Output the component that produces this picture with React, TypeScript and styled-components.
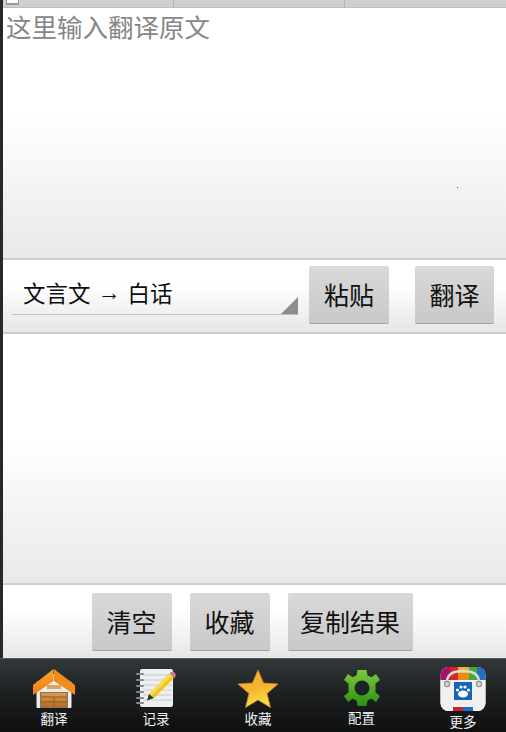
import React from "react";
import styled, { createGlobalStyle } from "styled-components";

const Global = createGlobalStyle`
  html, body { margin: 0; padding: 0; background: #fff; overflow: hidden; }
  #root { width: 506px; height: 732px; }
`;

const Screen = styled.div`
  width: 506px;
  height: 732px;
  overflow: hidden;
  display: flex;
  flex-direction: column;
  font-family: "Noto Sans CJK SC", "Noto Sans", sans-serif;
  background: #26292a;
`;
const Content = styled.div`
  margin-left: 3px;
  display: flex;
  flex-direction: column;
  background: #fff;
`;
const TabStrip = styled.div`
  height: 7px;
  display: flex;
  background: #cfcfcf;
  border-bottom: 1px solid #bdbdbd;
`;
const TabCell = styled.div<{ $w: number }>`
  width: ${(p) => p.$w}px;
  flex: none;
  border-right: 1px solid #b4b4b4;
  position: relative;
`;
const TabIcon = styled.span`
  position: absolute;
  left: 3px;
  top: 0;
  width: 11px;
  height: 3px;
  background: #fff;
  border: solid #9a9a9a;
  border-width: 0 1px 2px;
`;
const TextPane = styled.div<{ $h: number }>`
  height: ${(p) => p.$h}px;
  position: relative;
  box-sizing: border-box;
  padding: 3px 3px;
  background: linear-gradient(#fff 0%, #fff 42%, #e9e9e9 100%);
  border-bottom: 2px solid #cdcdcd;
`;
const Placeholder = styled.div`
  font-size: 25.5px;
  line-height: 30px;
  color: #868686;
`;
const Speck = styled.i`
  position: absolute;
  left: 454px;
  top: 179px;
  width: 1px;
  height: 1px;
  background: #a04040;
`;
const ActionRow = styled.div<{ $h: number; $top: number }>`
  height: ${(p) => p.$h}px;
  box-sizing: border-box;
  padding-top: ${(p) => p.$top}px;
  display: flex;
  background: linear-gradient(#fff 0%, #fff 35%, #e6e6e6 100%);
`;
const CenterRow = styled(ActionRow)`
  justify-content: center;
  gap: 18px;
  padding-right: 5px;
`;
const SelectRow = styled(ActionRow)`
  border-bottom: 2px solid #cdcdcd;
  align-items: flex-start;
`;
const Select = styled.div`
  width: 286px;
  height: 50px;
  margin: -1px 11px 0 9px;
  box-sizing: border-box;
  padding: 8px 0 0 11px;
  position: relative;
  border-bottom: 1px solid #c0c0c0;
  font-size: 22.5px;
  line-height: 38px;
  color: #0c0c0c;
  display: flex;
  gap: 7px;
`;
const SelectArrow = styled.span`
  font-family: "Liberation Sans", sans-serif;
  font-size: 23px;
`;
const SelectCorner = styled.span`
  position: absolute;
  right: 0;
  bottom: 0;
  width: 0;
  height: 0;
  border-style: solid;
  border-width: 0 0 17px 17px;
  border-color: transparent transparent #8c8c8c transparent;
`;
const PushButton = styled.button<{ $w: number; $ml?: number }>`
  width: ${(p) => p.$w}px;
  height: 58px;
  margin: 0 0 0 ${(p) => p.$ml ?? 0}px;
  padding: 0;
  flex: none;
  font-family: inherit;
  font-size: 25px;
  line-height: 1;
  color: #111;
  background: linear-gradient(#d9d9d9, #c9c9c9);
  border: none;
  border-bottom: 1px solid #a2a2a2;
  border-radius: 2px;
`;
const NavBar = styled.nav`
  height: 74px;
  box-sizing: border-box;
  padding-left: 3px;
  border-top: 1px solid #55595a;
  display: grid;
  grid-template-columns: repeat(5, 102px);
  background: linear-gradient(#33383a 0%, #1e2122 45%, #0e0f0f 100%);
`;
const NavItem = styled.div<{ $pt: number; $nudge?: number }>`
  display: flex;
  flex-direction: column;
  align-items: center;
  padding-top: ${(p) => p.$pt}px;
  margin-left: ${(p) => p.$nudge ?? 0}px;
  color: #f2f2f2;
  font-size: 13.5px;
  line-height: 16px;
`;
const NavIcon = styled.svg`
  display: block;
  flex: none;
`;
const GearLabel = styled.span`
  margin-top: 3px;
`;

const House = () => (
  <NavIcon width="44" height="42" viewBox="0 0 44 42">
    <defs>
      <linearGradient id="roofL" x1="0" y1="0" x2="0" y2="1"><stop offset="0" stopColor="#fba62c" /><stop offset="1" stopColor="#ee7c14" /></linearGradient>
      <linearGradient id="door" x1="0" y1="0" x2="0" y2="1"><stop offset="0" stopColor="#d99a52" /><stop offset="1" stopColor="#b46d24" /></linearGradient>
    </defs>
    <path d="M4.500 14 L22 6 L39.500 14 V39 Q39.500 40 38.500 40 H5.500 Q4.500 40 4.500 39Z" fill="#ecebe6" />
    <path d="M21.500 1 L1 17 V27 L21.500 13Z" fill="url(#roofL)" />
    <path d="M22 1 L43 17 V27 L22 13Z" fill="#f18c1e" />
    <rect x="15" y="17" width="14" height="4" fill="#d9a468" />
    <rect x="8" y="24" width="28" height="16" fill="#8a7660" />
    <rect x="9.500" y="25" width="25" height="14" fill="url(#door)" />
    <path d="M9.500 29H34.500M9.500 34H34.500M22 29V39" stroke="#94591d" strokeWidth="1" />
  </NavIcon>
);

const Notebook = () => (
  <NavIcon width="44" height="42" viewBox="0 0 44 42">
    <rect x="6" y="1" width="33" height="38" rx="2" fill="#efefef" />
    <path d="M9 7H38M9 12H38M9 17H38M9 22H38M9 27H38M9 32H38" stroke="#c3cbd4" strokeWidth="1" />
    <path d="M3 6H9M3 12H9M3 18H9M3 24H9M3 30H9M3 35H9" stroke="#7f8a8c" strokeWidth="2" strokeLinecap="round" />
    <path d="M35 6 L40 10 L20 30 L15 26Z" fill="#f1c41a" />
    <path d="M35 6 L37.500 8 L17.500 28 L15 26Z" fill="#f9dc4a" />
    <path d="M35.500 5.500 Q38 2 40.500 4.500 Q43 7 40.500 10Z" fill="#c87a9a" />
    <path d="M15 26 L20 30 L13 32.500Z" fill="#2d3a28" />
  </NavIcon>
);

const Star = () => (
  <NavIcon width="44" height="42" viewBox="0 0 44 42">
    <defs>
      <linearGradient id="starF" x1="0" y1="0" x2="0.300" y2="1"><stop offset="0" stopColor="#f8ad38" /><stop offset="0.550" stopColor="#f6b32c" /><stop offset="1" stopColor="#f8dc4a" /></linearGradient>
    </defs>
    <path d="M22 2 L27.500 15 L42 16 L31 25.500 L34.500 39.500 L22 32 L9.500 39.500 L13 25.500 L2 16 L16.500 15Z" fill="url(#starF)" stroke="#c98a24" strokeWidth="0.800" strokeLinejoin="round" />
  </NavIcon>
);

const Gear = () => (
  <NavIcon width="36" height="36" viewBox="-18 -18 36 36">
    <defs>
      <linearGradient id="gearF" x1="0" y1="0" x2="0" y2="1"><stop offset="0" stopColor="#7ccb3a" /><stop offset="1" stopColor="#2d8f14" /></linearGradient>
    </defs>
    <path fill="url(#gearF)" d="M-4.500 -18 H4.500 L5.500 -12.500 L9.500 -10.800 L14 -14 L18 -8 L13.500 -4.500 L13.500 4.500 L18 8 L14 14 L9.500 10.800 L5.500 12.500 L4.500 18 H-4.500 L-5.500 12.500 L-9.500 10.800 L-14 14 L-18 8 L-13.500 4.500 L-13.500 -4.500 L-18 -8 L-14 -14 L-9.500 -10.800 L-5.500 -12.500Z" />
    <circle r="7.500" fill="#1d2627" />
  </NavIcon>
);

const Bag = () => (
  <NavIcon width="46" height="46" viewBox="0 0 46 46">
    <defs>
      <clipPath id="bagClip"><rect x="0.500" y="0" width="45" height="44" rx="8" /></clipPath>
    </defs>
    <g clipPath="url(#bagClip)">
      <rect x="0" y="0" width="46" height="46" fill="#ececec" />
      <rect x="0" y="0" width="10" height="13" fill="#a4126e" />
      <rect x="10" y="0" width="8" height="13" fill="#d02a2a" />
      <rect x="18" y="0" width="11" height="6" fill="#f0b41e" />
      <rect x="18" y="6" width="11" height="7" fill="#e88a1a" />
      <rect x="29" y="0" width="8" height="13" fill="#4aa83a" />
      <rect x="37" y="0" width="9" height="13" fill="#1e70c8" />
      <rect x="0" y="13" width="46" height="31" fill="#f0f0ee" />
      <rect x="13" y="40" width="10" height="4" fill="#d0202a" />
      <rect x="23" y="40" width="10" height="4" fill="#1e70d0" />
    </g>
    <path d="M7 18 V14 Q8 4 23 4 Q38 4 39 14 V18" fill="none" stroke="#dedbd2" strokeWidth="2.500" />
    <circle cx="7" cy="17" r="2.500" fill="none" stroke="#999" strokeWidth="1.500" />
    <circle cx="39" cy="17" r="2.500" fill="none" stroke="#999" strokeWidth="1.500" />
    <rect x="14" y="15" width="18" height="18" fill="#1565b8" />
    <ellipse cx="23" cy="27" rx="5" ry="3.500" fill="#fff" />
    <circle cx="17.500" cy="23" r="1.600" fill="#fff" />
    <circle cx="21" cy="20" r="1.600" fill="#fff" />
    <circle cx="25" cy="20" r="1.600" fill="#fff" />
    <circle cx="28.500" cy="23" r="1.600" fill="#fff" />
  </NavIcon>
);

export default function App() {
  return (
    <Screen>
      <Global />
      <Content>
        <TabStrip>
          <TabCell $w={170}><TabIcon /></TabCell>
          <TabCell $w={170} />
          <TabCell $w={163} />
        </TabStrip>
        <TextPane $h={252}>
          <Placeholder>这里输入翻译原文</Placeholder>
          <Speck />
        </TextPane>
        <SelectRow $h={74} $top={6}>
          <Select>
            <span>文言文</span>
            <SelectArrow>→</SelectArrow>
            <span>白话</span>
            <SelectCorner />
          </Select>
          <PushButton $w={80}>粘贴</PushButton>
          <PushButton $w={79} $ml={26}>翻译</PushButton>
        </SelectRow>
        <TextPane $h={251} />
        <CenterRow $h={73} $top={8}>
          <PushButton $w={80}>清空</PushButton>
          <PushButton $w={80}>收藏</PushButton>
          <PushButton $w={125}>复制结果</PushButton>
        </CenterRow>
      </Content>
      <NavBar>
        <NavItem $pt={9}><House />翻译</NavItem>
        <NavItem $pt={9}><Notebook />记录</NavItem>
        <NavItem $pt={9}><Star />收藏</NavItem>
        <NavItem $pt={11} $nudge={3}><Gear /><GearLabel>配置</GearLabel></NavItem>
        <NavItem $pt={8} $nudge={2}><Bag />更多</NavItem>
      </NavBar>
    </Screen>
  );
}
